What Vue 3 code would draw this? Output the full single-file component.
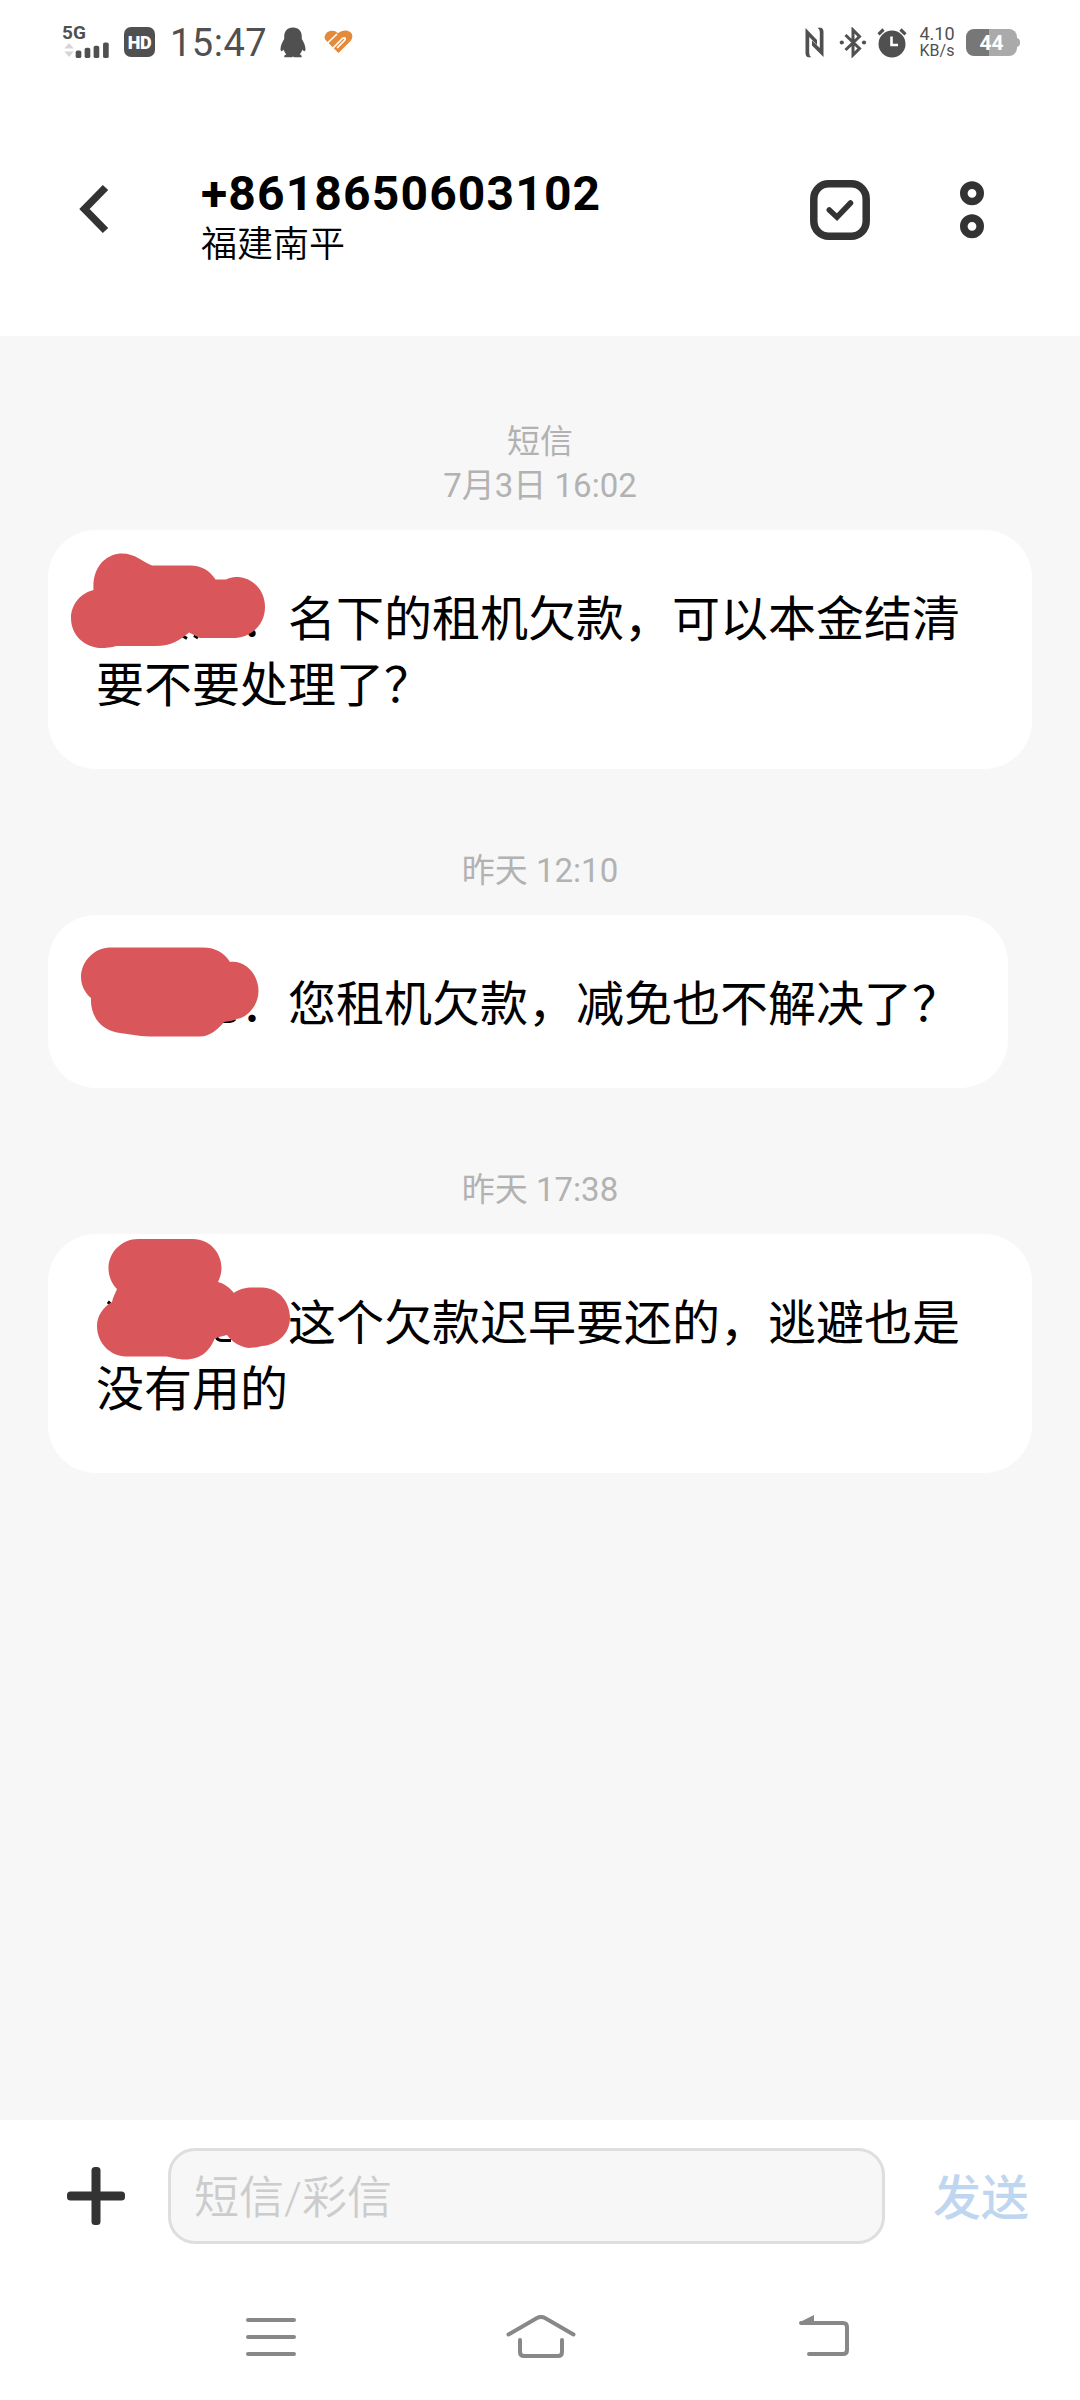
<script setup>
const messages = [
  {
    labels: ['短信', '7月3日 16:02'],
    text: '：名下的租机欠款，可以本金结清要不要处理了？',
    top: -10,
    blob: 'M53.5 70C52 45 68 33.5 82 33.5C95 33.5 103 42 112 45.5H150C162 45.5 170 51 175.5 59.5H186C190 57.5 194 57 198 57C212 58 225 69 225 87C225 104 212 118 192 118H160L149 112.5C140 120 132 126 115 126H76C72 127.5 66 128 60 128C44 127 31 115 31 98C31 84 41 73 53.5 70Z',
    marks: 'M142 115.5L147 118.5M154 115.5L158 118'
  },
  {
    labels: ['昨天 12:10'],
    text: '：您租机欠款，减免也不解决了？',
    top: -15,
    blob: 'M51 98C44 92 41 84 41 77C41 62 54 47.5 70 47.5H163C174 47.5 184 52 190 62C205 60 218.5 74 218.5 91C218.5 105 208 117 197 119C193 121 188 121 184 122C178 129 170 136.5 160 136.5H110C97 136 90 134 80 133C62 131 50 117 51 98Z',
    marks: 'M182 121.5H190Q193 121.5 195 119'
  },
  {
    labels: ['昨天 17:38'],
    text: '：这个欠款迟早要还的，逃避也是没有用的',
    top: -14,
    blob: 'M77 69C71 63 68.5 55 68.5 48C68.5 32 82 19 98 19H153C170 19 181.5 33 181.5 48C181.5 53 180 58 178 62C185 64 190 68 194 73C199 69 206 67.5 212 67.5H222C238 68 250 81 250 98C250 113 238 125 222 126C217 127.5 212 128 209 128C200 127 192 122 187 115L175 118C170 130 162 139.5 145 139.5C137 139.5 132 137 126 136.5H86C70 136 57 123 57 106C57 96 63 87 72 82C73 77 75 74 77 69Z',
    marks: 'M176.5 117.5Q178 120.500 182 120.500H191M68 84L70 81.500'
  }
]
</script>

<template>
  <div class="screen">
    <div class="status">
      <div class="network">
        <span class="gen">5G</span>
        <svg width="48" height="18" viewBox="0 0 48 18">
          <path d="M0 7L5 1L10 7ZM0 10L5 16L10 10Z" fill="#d6d6d6" />
          <g fill="#505050">
            <rect x="12" y="9" width="6" height="8" rx="2" />
            <rect x="21.5" y="6" width="6" height="11" rx="2" />
            <rect x="31" y="4" width="6" height="13" rx="2" />
            <rect x="41" y="0.5" width="6" height="16.5" rx="2" />
          </g>
        </svg>
      </div>
      <span class="hd">HD</span>
      <span class="clock">15:47</span>
      <svg class="penguin" width="26" height="31" viewBox="0 0 26 31">
        <path d="M13 0.5C7 0.5 4.2 4.5 4.2 9.5V12C2.5 15 0.5 18.5 0.5 22C0.5 24.5 2 25 3.6 22.5C4 24.3 5 26 6.3 27.2C4.5 28 4 29 4.4 30.2H12L13 29.5L14 30.2H21.6C22 29 21.5 28 19.7 27.2C21 26 22 24.3 22.4 22.5C24 25 25.5 24.5 25.5 22C25.5 18.5 23.5 15 21.8 12V9.5C21.8 4.5 19 0.5 13 0.5Z" fill="#505050" />
      </svg>
      <svg class="heart" width="30" height="25" viewBox="0 0 30 25">
        <path d="M14 3.2C11 0 6 0 3 2.5C0 5.500 0 8.500 2 10.500L14.500 23L26 11.500C29 8.500 29 4.500 26.500 2.300C23 -0.500 18 0 14 3.200Z" fill="#e5893a" />
        <path d="M3.500 13L12.500 4.500M8.500 18.500L18.500 8.500Q20.500 7 21.200 8.500Q21.500 9.500 20.500 10.500L13.500 17.500" fill="none" stroke="#fff" stroke-width="1.7" stroke-linecap="round" />
      </svg>
      <div class="status-right">
        <svg width="20" height="31" viewBox="0 0 20 31">
          <g fill="#505050">
            <path d="M0.5 1L12 13V18L4.2 10V26Q4.2 29 6.5 30.3H3Q0.5 29.5 0.5 26Z" />
            <path d="M18.5 30L7 18.5V13.5L14.8 21V5Q14.8 2 12.5 0.7H16Q18.5 1.5 18.5 5Z" />
          </g>
        </svg>
        <svg class="bt" width="28" height="31" viewBox="0 0 28 31">
          <path d="M6.5 8L20.5 21.5L14 28V3L20.5 9.5L6.5 23" fill="none" stroke="#505050" stroke-width="3" />
          <circle cx="2.8" cy="15.5" r="2.1" fill="#505050" />
          <circle cx="25" cy="15.5" r="2.1" fill="#505050" />
        </svg>
        <svg class="alarm" width="30" height="31" viewBox="0 0 30 31">
          <circle cx="15" cy="17" r="13.5" fill="#505050" />
          <path d="M1.5 7.3L6.5 2.5M28.5 7.3L23.5 2.5" stroke="#505050" stroke-width="3.2" />
          <path d="M14.5 9.5V18H21" fill="none" stroke="#fff" stroke-width="2.6" />
        </svg>
        <div class="speed"><span>4.10</span><span>KB/s</span></div>
        <div class="battery"><span>44</span></div>
      </div>
    </div>

    <header class="header">
      <svg class="back" width="32" height="50" viewBox="0 0 32 50">
        <path d="M27.5 3.5L6.500 25L27.5 46.5" fill="none" stroke="#333" stroke-width="7.5" />
      </svg>
      <div class="contact">
        <div class="number">+8618650603102</div>
        <div class="place">福建南平</div>
      </div>
      <svg class="select" width="60" height="60" viewBox="0 0 60 60">
        <rect x="3.8" y="3.8" width="52.4" height="52.4" rx="15" fill="none" stroke="#333" stroke-width="7.5" />
        <path d="M19.3 30L27 37.2L40.5 23" fill="none" stroke="#333" stroke-width="5.500" stroke-linecap="round" />
      </svg>
      <svg class="more" width="26" height="60" viewBox="0 0 26 60">
        <circle cx="13" cy="13.3" r="8.2" fill="none" stroke="#333" stroke-width="7.6" />
        <circle cx="13" cy="46.3" r="8.2" fill="none" stroke="#333" stroke-width="7.6" />
      </svg>
    </header>

    <main class="thread">
      <section v-for="m in messages" :key="m.text" class="message">
        <div class="stamp">
          <div v-for="l in m.labels" :key="l">{{ l }}</div>
        </div>
        <div class="bubble">
          <p>{{ m.text }}</p>
          <svg class="scribble" :style="{ top: m.top + 'px' }" width="260" height="145" viewBox="0 0 260 145">
            <path :d="m.marks" fill="none" stroke="#000" stroke-width="3" />
            <path :d="m.blob" fill="#d9565b" />
          </svg>
        </div>
      </section>
    </main>

    <footer class="composer">
      <svg width="60" height="60" viewBox="0 0 60 60">
        <rect x="1" y="25.5" width="58" height="9" rx="3.5" fill="#333" />
        <rect x="25.5" y="1" width="9" height="58" rx="3.5" fill="#333" />
      </svg>
      <div class="field">短信/彩信</div>
      <div class="send">发送</div>
    </footer>

    <nav class="nav">
      <svg width="50" height="44" viewBox="0 0 50 44">
        <path d="M2 5H48M2 22H48M2 39H48" stroke="#888" stroke-width="4" stroke-linecap="round" />
      </svg>
      <svg class="home" width="72" height="46" viewBox="0 0 72 46">
        <path d="M3.5 19.500L32 3Q36 1 40 3L68.500 19.500M15 25V37Q15 41 19 41H53Q57 41 57 37V25" fill="none" stroke="#888" stroke-width="4" stroke-linecap="round" />
      </svg>
      <svg class="return" width="52" height="44" viewBox="0 0 52 44">
        <path d="M3 8H45Q49 8 49 12V35Q49 39 45 39H11" fill="none" stroke="#888" stroke-width="4" stroke-linecap="round" />
        <path d="M2 7L16 0V9H2Z" fill="#888" />
      </svg>
    </nav>
  </div>
</template>

<style>
body {
  margin: 0;
  background: #fff;
}
</style>

<style scoped>
.screen {
  width: 1080px;
  height: 2400px;
  display: flex;
  flex-direction: column;
  background: #fff;
  color: #000;
  font-family: Roboto, "Noto Sans CJK SC", sans-serif;
  overflow: hidden;
}
.status {
  height: 84px;
  box-sizing: border-box;
  padding: 0 58px 0 62px;
  display: flex;
  align-items: center;
  color: #505050;
}
.network {
  width: 50px;
  height: 34px;
  display: flex;
  flex-direction: column;
}
.gen {
  font-size: 19px;
  line-height: 16px;
  font-weight: 700;
}
.network svg {
  margin-left: 1px;
  margin-top: 1px;
}
.hd {
  width: 31px;
  height: 30px;
  margin-left: 12px;
  border-radius: 7px;
  background: #505050;
  color: #fff;
  font-size: 18px;
  line-height: 31px;
  font-weight: 900;
  text-align: center;
  letter-spacing: -0.5px;
}
.clock {
  width: 100px;
  margin-left: 15px;
  padding-top: 2px;
  font-size: 38px;
  line-height: 42px;
  letter-spacing: 0.5px;
}
.penguin {
  margin-left: 10px;
}
.heart {
  margin-left: 18px;
}
.status-right {
  margin-left: auto;
  display: flex;
  align-items: center;
}
.bt {
  margin-left: 14px;
}
.alarm {
  margin-left: 10px;
}
.speed {
  width: 38px;
  margin-left: 11px;
  display: flex;
  flex-direction: column;
  align-items: center;
  font-size: 18px;
  line-height: 17px;
}
.speed span:last-child {
  font-size: 16px;
}
.battery {
  position: relative;
  width: 51px;
  height: 27px;
  margin: 0 5px 0 10px;
  border-radius: 8px;
  background: linear-gradient(90deg, #777 45%, #aaa 45%);
  color: #fff;
  font-size: 21px;
  line-height: 28px;
  font-weight: 700;
  text-align: center;
}
.battery::after {
  content: "";
  position: absolute;
  right: -3px;
  top: 9px;
  width: 4px;
  height: 9px;
  border-radius: 0 4px 4px 0;
  background: #aaa;
}
.header {
  height: 252px;
  box-sizing: border-box;
  padding: 0 95px 0 78px;
  display: flex;
  align-items: flex-start;
}
.back {
  margin-top: 100px;
}
.contact {
  flex: 1;
  margin: 81px 0 0 91px;
}
.number {
  font-size: 48px;
  line-height: 57px;
  font-weight: 700;
  letter-spacing: 1.15px;
}
.place {
  font-size: 36px;
  line-height: 46px;
  font-weight: 350;
}
.select {
  margin-top: 96px;
}
.more {
  margin: 96px 0 0 89px;
}
.thread {
  height: 1784px;
  box-sizing: border-box;
  padding: 84px 48px 0;
  background: #f7f7f7;
}
.message + .message {
  margin-top: 80px;
}
.stamp {
  color: #b2b2b2;
  font-size: 33px;
  line-height: 44px;
  text-align: center;
  margin-bottom: 22px;
}
.bubble {
  position: relative;
  width: fit-content;
  box-sizing: border-box;
  max-width: 984px;
  padding: 52px 48px 55px;
  border-radius: 48px;
  background: #fff;
}
.bubble p {
  margin: 0;
  text-indent: 144px;
  font-family: "Noto Sans CJK SC", sans-serif;
  font-size: 48px;
  line-height: 66px;
  text-spacing-trim: space-all;
}
.scribble {
  position: absolute;
  left: -8px;
}
.composer {
  height: 152px;
  box-sizing: border-box;
  padding: 0 50px 0 66px;
  display: flex;
  align-items: center;
}
.field {
  width: 717px;
  height: 96px;
  box-sizing: border-box;
  margin-left: 42px;
  padding: 2px 0 0 23px;
  border: 3px solid #dedede;
  border-radius: 27px;
  background: #f7f7f7;
  color: #ccc;
  font-size: 45px;
  line-height: 92px;
  font-weight: 350;
}
.send {
  margin-left: 48px;
  padding-top: 5px;
  color: #bfd6f0;
  font-size: 48px;
  line-height: 60px;
  font-weight: 500;
}
.nav {
  padding: 43px 0 0 246px;
  display: flex;
  align-items: flex-start;
}
.home {
  margin-left: 209px;
}
.return {
  margin-left: 221px;
}
</style>
